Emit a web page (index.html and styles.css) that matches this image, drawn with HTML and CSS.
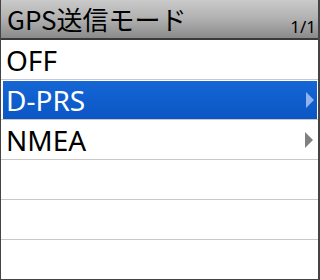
FILE: index.html
```html
<!DOCTYPE html>
<html lang="ja">
<head>
    <meta charset="UTF-8">
    <title>GPS送信モード</title>
    <link rel="stylesheet" href="styles.css">
</head>
<body>
    <div class="screen">
        <div class="title">
            <span class="name">GPS送信モード</span>
            <span class="page">1/1</span>
        </div>
        <div class="list">
            <div class="row"><span class="label">OFF</span></div>
            <div class="row selected">
                <div class="hilite">
                    <span class="label">D-PRS</span>
                    <span class="arrow"></span>
                </div>
            </div>
            <div class="row">
                <span class="label">NMEA</span>
                <span class="arrow"></span>
            </div>
            <div class="row"></div>
            <div class="row"></div>
            <div class="row last"></div>
        </div>
    </div>
</body>
</html>
```

FILE: styles.css
```css
*{
    box-sizing: border-box;
}
body{
    margin: 0;
    background: white;
    font-family: 'Noto Sans', 'Noto Sans CJK JP', sans-serif;
}
.screen{
    width: 320px;
    height: 280px;
    overflow: hidden;
    border-left: 1px solid #444;
    border-right: 2px solid #444;
    border-bottom: 1px solid #444;
}
.title{
    height: 40px;
    display: flex;
    justify-content: space-between;
    align-items: flex-end;
    padding: 0 2px 1px 6px;
    background: linear-gradient(#cacaca, #b0b0b0 50%, #8a8a8a);
    border-bottom: 2px solid #3a3a3a;
}
.name{
    font-family: 'Noto Sans CJK JP', sans-serif;
    font-size: 26px;
    line-height: 36px;
    color: black;
}
.page{
    font-size: 17px;
    line-height: 20px;
    color: black;
}
.row{
    height: 40px;
    display: flex;
    align-items: center;
    justify-content: space-between;
    padding: 0 5px 0 5px;
    border-bottom: 1px solid #c8c8c8;
}
.row.last{
    border-bottom: none;
}
.label{
    font-size: 28px;
    color: black;
}
.row.selected{
    padding: 1px 1px 0 2px;
    align-items: stretch;
}
.hilite{
    flex: 1;
    display: flex;
    align-items: center;
    justify-content: space-between;
    padding: 0 3px 0 3px;
    background: linear-gradient(#1666d6, #0a56c4);
}
.hilite .label{
    color: white;
}
.arrow{
    width: 0;
    height: 0;
    border-top: 8px solid transparent;
    border-bottom: 8px solid transparent;
    border-left: 8px solid #808080;
}
.hilite .arrow{
    border-left-color: #8fb4ee;
}
```
